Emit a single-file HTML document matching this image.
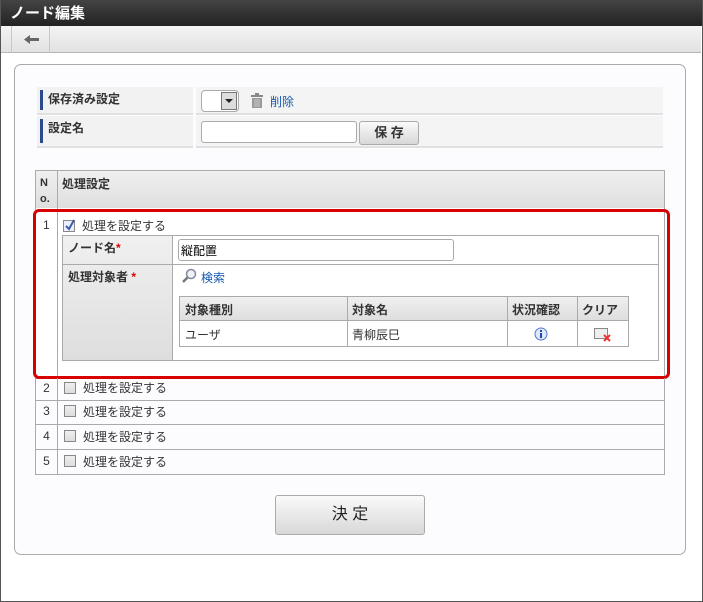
<!DOCTYPE html>
<html><head><meta charset="utf-8">
<style>
*{box-sizing:border-box;margin:0;padding:0}
body{width:703px;height:602px;position:relative;background:#fff;font-family:"Liberation Sans","Noto Sans CJK JP",sans-serif;font-size:12px;color:#333;overflow:hidden}
.a{position:absolute}
.frame{left:0;top:0;width:703px;height:602px;border:1px solid #555;border-top:none}
.title{left:0;top:0;width:703px;height:26px;background:linear-gradient(#444,#222);color:#fff;font-size:15px;font-weight:bold;padding:2px 0 0 10px}
.tool{left:0;top:26px;width:701px;height:27px;background:linear-gradient(#f4f4f4,#e2e2e2);border-bottom:1px solid #b5b5b5}
.back{left:11px;top:26px;width:39px;height:27px;border-left:1px solid #c8c8c8;border-right:1px solid #c8c8c8}
.panel{left:14px;top:64px;width:672px;height:491px;border:1px solid #aaa;border-radius:7px;background:#fcfcfe}
.lab{background:#f2f2f2;border-bottom:2px solid #e0e0e0;font-weight:bold;padding:3px 0 0 11px}
.lab:before{content:"";position:absolute;left:3px;top:3px;bottom:3px;width:3px;background:#2b4a8a}
.val{background:#f4f4f4;border-bottom:2px solid #e0e0e0}
.inp{background:#fff;border:1px solid #aaa;border-radius:3px}
.btn{background:linear-gradient(#fafafa,#d8d8d8);border:1px solid #aaa;border-radius:3px;text-align:center;font-weight:bold}
.cell{border:1px solid #aaa}
.hd{background:linear-gradient(#f0f0f0,#dedede)}
.cb{width:12px;height:12px;border:1px solid #888;background:linear-gradient(#eee,#ddd)}
.link{color:#1558b0}
.row{left:35px;width:630px;height:25px;border:1px solid #aaa;border-top:none}
.row .n{position:absolute;left:0;top:0;width:22px;height:24px;border-right:1px solid #aaa;text-align:center;line-height:22px}
.row .cb{position:absolute;left:28px;top:5px}
.row .t{position:absolute;left:47px;top:3px}
</style></head><body>
<div class="a title">ノード編集</div>
<div class="a tool"></div>
<div class="a back"><svg width="39" height="27"><path d="M12 13.5 L18 9 V12 H27 V15 H18 V18 Z" fill="#666"/></svg></div>
<div class="a panel"></div>

<div class="a lab" style="left:37px;top:87px;width:156px;height:28px">保存済み設定</div>
<div class="a val" style="left:196px;top:87px;width:467px;height:28px"></div>
<div class="a inp" style="left:201px;top:90px;width:38px;height:22px;border-radius:4px"><div class="a" style="right:1px;top:1px;width:16px;height:18px;border:1px solid #777;background:#ddd"><svg width="14" height="16"><path d="M3 6 H11 L7 10 Z" fill="#222"/></svg></div></div>
<svg class="a" style="left:250px;top:93px" width="14" height="15"><rect x="1" y="2" width="12" height="2" fill="#888"/><rect x="5" y="0" width="4" height="2" fill="#888"/><rect x="2" y="5" width="10" height="10" fill="#999"/><path d="M5 6V14M7 6V14M9 6V14" stroke="#ccc"/></svg>
<div class="a link" style="left:270px;top:93px">削除</div>

<div class="a lab" style="left:37px;top:116px;width:156px;height:32px">設定名</div>
<div class="a val" style="left:196px;top:116px;width:467px;height:32px"></div>
<div class="a inp" style="left:201px;top:121px;width:156px;height:22px"></div>
<div class="a btn" style="left:359px;top:121px;width:60px;height:24px;line-height:22px;font-size:13px">保 存</div>

<div class="a hd" style="left:35px;top:170px;width:630px;height:39px;border:1px solid #aaa"></div>
<div class="a" style="left:57px;top:170px;width:1px;height:39px;background:#aaa"></div>
<div class="a" style="left:40px;top:175px;font-weight:bold;font-size:11px;line-height:16px">N<br>o.</div>
<div class="a" style="left:62px;top:175px;font-weight:bold">処理設定</div>

<div class="a" style="left:35px;top:208px;width:630px;height:171px;border:1px solid #aaa;border-top:none;background:#fff"></div>
<div class="a" style="left:57px;top:208px;width:1px;height:170px;background:#aaa"></div>
<div class="a" style="left:43px;top:218px">1</div>
<div class="a cb" style="left:63px;top:220px;background:#eef;"><svg class="a" style="left:0;top:-2px" width="12" height="13"><path d="M2 7 L5 10 L10 1" stroke="#3b5ea8" stroke-width="2" fill="none"/></svg></div>
<div class="a" style="left:82px;top:217px">処理を設定する</div>

<div class="a" style="left:62px;top:235px;width:597px;height:126px;border:1px solid #aaa;background:#fff"></div>
<div class="a hd" style="left:63px;top:236px;width:110px;height:124px;border-right:1px solid #aaa"></div>
<div class="a" style="left:63px;top:264px;width:595px;height:1px;background:#aaa"></div>
<div class="a" style="left:68px;top:239px;font-weight:bold">ノード名<span style="color:#d00">*</span></div>
<div class="a" style="left:68px;top:268px;font-weight:bold">処理対象者 <span style="color:#d00">*</span></div>
<div class="a inp" style="left:178px;top:239px;width:276px;height:22px;padding:2px 0 0 2px;color:#000">縦配置</div>
<svg class="a" style="left:181px;top:268px" width="16" height="16"><circle cx="10" cy="6" r="4.5" fill="#eef3fa" stroke="#889" stroke-width="1.5"/><path d="M6.5 9.5 L2 14" stroke="#777" stroke-width="2.5"/></svg>
<div class="a link" style="left:201px;top:269px">検索</div>

<div class="a" style="left:179px;top:296px;width:450px;height:51px;border:1px solid #aaa"></div>
<div class="a hd" style="left:180px;top:297px;width:448px;height:24px;border-bottom:1px solid #aaa"></div>
<div class="a" style="left:347px;top:297px;width:1px;height:49px;background:#aaa"></div>
<div class="a" style="left:507px;top:297px;width:1px;height:49px;background:#aaa"></div>
<div class="a" style="left:577px;top:297px;width:1px;height:49px;background:#aaa"></div>
<div class="a" style="left:185px;top:301px;font-weight:bold">対象種別</div>
<div class="a" style="left:352px;top:301px;font-weight:bold">対象名</div>
<div class="a" style="left:512px;top:301px;font-weight:bold">状況確認</div>
<div class="a" style="left:582px;top:301px;font-weight:bold">クリア</div>
<div class="a" style="left:185px;top:326px">ユーザ</div>
<div class="a" style="left:352px;top:326px">青柳辰巳</div>
<svg class="a" style="left:534px;top:327px" width="14" height="14"><circle cx="7" cy="7" r="6" fill="#dfe9fb" stroke="#4f78d0"/><rect x="6" y="6" width="2" height="5" fill="#1d47b0"/><rect x="6" y="3" width="2" height="2" fill="#1d47b0"/></svg>
<svg class="a" style="left:594px;top:327px" width="18" height="16"><rect x="0.5" y="1.5" width="13" height="10" fill="#eee" stroke="#888"/><path d="M10 8 L16 14 M16 8 L10 14" stroke="#e33" stroke-width="2"/></svg>

<div class="a" style="left:33px;top:209px;width:637px;height:170px;border:3px solid #d90000;border-radius:6px"></div>

<div class="a row" style="top:378px;height:23px"><div class="n" style="height:22px;line-height:20px">2</div><div class="cb" style="top:4px"></div><div class="t" style="top:1px">処理を設定する</div></div>
<div class="a row" style="top:400px"><div class="n">3</div><div class="cb"></div><div class="t">処理を設定する</div></div>
<div class="a row" style="top:425px"><div class="n">4</div><div class="cb"></div><div class="t">処理を設定する</div></div>
<div class="a row" style="top:450px"><div class="n">5</div><div class="cb"></div><div class="t">処理を設定する</div></div>

<div class="a btn" style="left:275px;top:495px;width:150px;height:40px;line-height:38px;font-size:16px;font-weight:normal;color:#222">決 定</div>
<div class="a frame"></div>
</body></html>
